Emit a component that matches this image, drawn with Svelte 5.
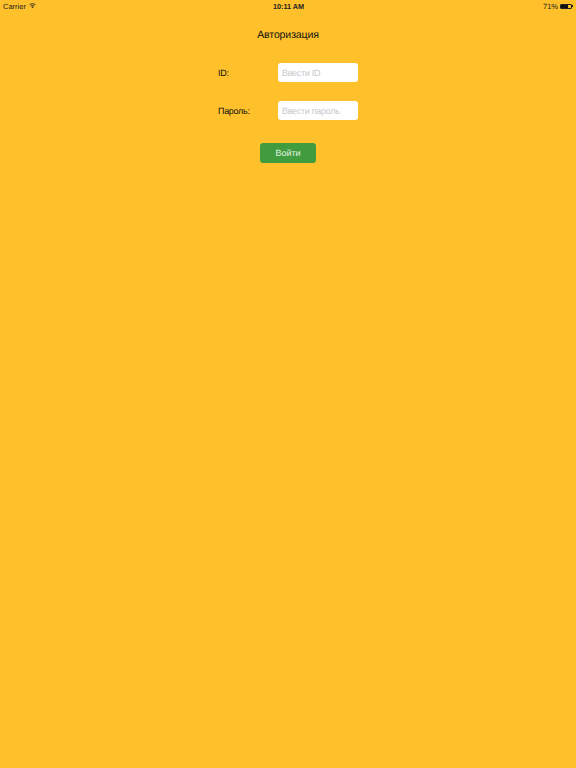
<script>
	let id = "";
	let password = "";
	let battery = 71;

	function login() {
		console.log("login", id);
	}
</script>

<main>
	<div class="status">
		<div class="left">
			<span>Carrier</span>
			<svg width="7" height="5.25" viewBox="0 0 8 6">
				<path d="M.6 2.1C2.6.4 5.4.4 7.4 2.1" fill="none" stroke="#222" stroke-width="1" />
				<path d="M2 3.5C3.2 2.5 4.8 2.5 6 3.5" fill="none" stroke="#222" stroke-width="1" />
				<path d="M2.8 4.5C3.5 3.9 4.5 3.9 5.2 4.5L4 5.9z" fill="#222" />
			</svg>
		</div>
		<div class="time">10:11 AM</div>
		<div class="right">
			<span>{battery}%</span>
			<div class="battery"><div class="level" style="width: {battery}%"></div></div>
			<div class="nub"></div>
		</div>
	</div>

	<h1>Авторизация</h1>

	<form class="login" on:submit|preventDefault={login}>
		<label class="row">
			<span>ID:</span>
			<input type="text" placeholder="Ввести ID" bind:value={id} />
		</label>
		<label class="row">
			<span>Пароль:</span>
			<input type="password" placeholder="Ввести пароль" bind:value={password} />
		</label>
		<button type="submit">Войти</button>
	</form>
</main>

<style>
	:global(body) {
		background-color: #ffc12b;
	}
	main {
		height: 768px;
		background-color: #ffc12b;
		font-family: "Liberation Sans", Arial, sans-serif;
		text-rendering: geometricPrecision;
		color: #111;
		overflow: hidden;
	}
	.status {
		height: 12px;
		padding: 0 3px;
		display: flex;
		align-items: center;
		justify-content: space-between;
		font-size: 7.5px;
		color: #222;
		position: relative;
	}
	.left,
	.right {
		display: flex;
		align-items: center;
	}
	.left {
		gap: 3px;
	}
	.time {
		position: absolute;
		left: 1px;
		right: 0;
		text-align: center;
		font-size: 7.25px;
		font-weight: 700;
	}
	.right span {
		margin-right: 2px;
	}
	.battery {
		width: 12px;
		height: 5px;
		border: 0.5px solid #222;
		box-sizing: border-box;
		border-radius: 1px;
	}
	.level {
		height: 100%;
		background: #111;
	}
	.nub {
		width: 1px;
		height: 2px;
		background: #222;
	}
	h1 {
		margin: 16px 0 0;
		font-size: 10.5px;
		letter-spacing: -0.1px;
		line-height: 14px;
		font-weight: 400;
		text-align: center;
	}
	.login {
		width: 140px;
		margin: 21px auto 0;
		display: flex;
		flex-direction: column;
		align-items: center;
		gap: 19px;
	}
	.row {
		width: 100%;
		display: flex;
		align-items: center;
		justify-content: space-between;
		font-size: 9px;
		letter-spacing: -0.3px;
	}
	.row span {
		padding-top: 1px;
	}
	input {
		width: 80px;
		height: 19px;
		box-sizing: border-box;
		border: none;
		border-radius: 3px;
		padding: 1px 4px 0;
		background: #fff;
		font-family: inherit;
		font-size: 9px;
		letter-spacing: -0.3px;
		text-rendering: geometricPrecision;
		outline: none;
	}
	input::placeholder {
		color: #c7c7cd;
		opacity: 1;
	}
	button {
		width: 56px;
		height: 20px;
		margin-top: 4px;
		border: none;
		border-radius: 3px;
		background: #419c3d;
		color: #e4f3e3;
		font-family: inherit;
		font-size: 9px;
		text-rendering: geometricPrecision;
		padding: 0;
	}
</style>
